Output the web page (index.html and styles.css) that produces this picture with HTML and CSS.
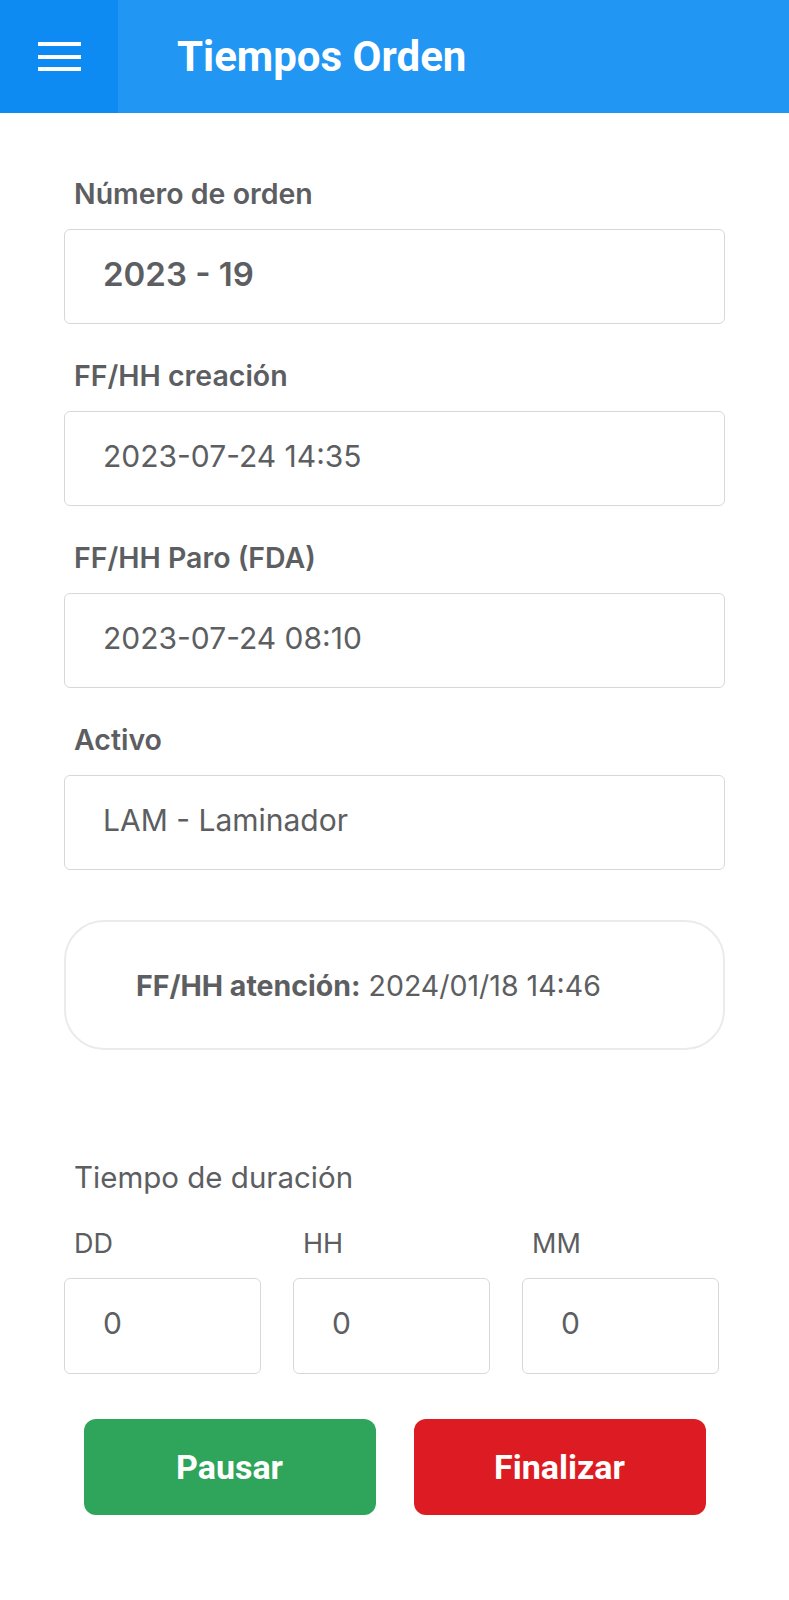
FILE: index.html
```html
<!DOCTYPE html>
<html>
	<head>
		<meta charset="UTF-8">
		<title>Tiempos Orden</title>
		<link rel="stylesheet" href="styles.css">
	</head>
	<body>

<!--barra superior-->
<div class="topbar">
    <div class="menu-btn">
        <span></span>
        <span></span>
        <span></span>
    </div>
    <div class="topbar-title">Tiempos Orden</div>
</div>

<div class="wrap">
    <div class="field">
        <label class="lb" for="txtOrden">Número de orden</label>
        <input class="txt txt-bold" type="text" id="txtOrden" value="2023 - 19" readonly>
    </div>
    <div class="field">
        <label class="lb" for="txtCreacion">FF/HH creación</label>
        <input class="txt" type="text" id="txtCreacion" value="2023-07-24 14:35" readonly>
    </div>
    <div class="field">
        <label class="lb" for="txtParo">FF/HH Paro (FDA)</label>
        <input class="txt" type="text" id="txtParo" value="2023-07-24 08:10" readonly>
    </div>
    <div class="field">
        <label class="lb" for="txtActivo">Activo</label>
        <input class="txt" type="text" id="txtActivo" value="LAM - Laminador" readonly>
    </div>

    <!--fecha de atencion-->
    <div class="card">
        <p><b>FF/HH atención:</b> 2024/01/18 14:46</p>
    </div>

    <div class="duration-title">Tiempo de duración</div>
    <div class="duration">
        <div class="duration-item">
            <label class="lb-small" for="txtDD">DD</label>
            <input class="txt" type="text" id="txtDD" value="0">
        </div>
        <div class="duration-item">
            <label class="lb-small" for="txtHH">HH</label>
            <input class="txt" type="text" id="txtHH" value="0">
        </div>
        <div class="duration-item">
            <label class="lb-small" for="txtMM">MM</label>
            <input class="txt" type="text" id="txtMM" value="0">
        </div>
    </div>
</div>

<!--botones-->
<div class="actions">
    <button class="btn btn-pause">Pausar</button>
    <button class="btn btn-end">Finalizar</button>
</div>

</body>
</html>
```

FILE: styles.css
```css
* {
    padding: 0;
    margin: 0;
    box-sizing: border-box;
}

body {
    width: 789px;
    background: #fff;
    font-family: "Inter", "Noto Sans", sans-serif;
    color: #5c5e61;
}

.topbar {
    height: 113px;
    display: flex;
    align-items: center;
    background-color: #2196f3;
}

.menu-btn {
    width: 118px;
    height: 100%;
    background-color: #0d8bf2;
    display: flex;
    flex-direction: column;
    justify-content: center;
    align-items: center;
    gap: 8.5px;
}

.menu-btn span {
    display: block;
    width: 43px;
    height: 4px;
    background: #fff;
}

.topbar-title {
    margin-left: 59px;
    font: bold 42px "Roboto", sans-serif;
    color: #fff;
}

.wrap {
    padding: 65px 64px 0;
}

.field {
    margin-bottom: 36px;
}

.lb {
    display: block;
    padding-left: 10px;
    font-size: 28.5px;
    font-weight: 600;
    line-height: 32px;
    margin-bottom: 19px;
}

.txt {
    display: block;
    width: 100%;
    height: 95px;
    padding: 0 38px 6px;
    border: 1.5px solid #d8d8d8;
    border-radius: 6px;
    font-family: inherit;
    font-size: 30px;
    color: #5c5e61;
    background: #fff;
    outline: none;
}

.txt-bold {
    font-size: 33px;
    font-weight: 600;
}

.card {
    margin-top: 50px;
    height: 130px;
    border: 2px solid #ebebeb;
    border-radius: 40px;
    display: flex;
    align-items: center;
    padding-left: 70px;
    font-size: 28.5px;
}

.card b {
    font-weight: 700;
}

.duration-title {
    margin-top: 110px;
    padding-left: 10px;
    font-size: 29.5px;
    line-height: 34px;
}

.duration {
    margin-top: 33px;
    display: grid;
    grid-template-columns: 197px 197px 197px;
    column-gap: 32px;
}

.lb-small {
    display: block;
    padding-left: 10px;
    font-size: 27px;
    line-height: 34px;
    margin-bottom: 17px;
}

.duration .txt {
    height: 96px;
}

.actions {
    margin-top: 45px;
    display: flex;
    justify-content: center;
    gap: 38px;
}

.btn {
    width: 292px;
    height: 96px;
    border: none;
    border-radius: 12px;
    font: bold 34px "Roboto", sans-serif;
    color: #fff;
    cursor: pointer;
}

.btn-pause {
    background-color: #2ea55a;
}

.btn-end {
    background-color: #dd1b22;
}
```
